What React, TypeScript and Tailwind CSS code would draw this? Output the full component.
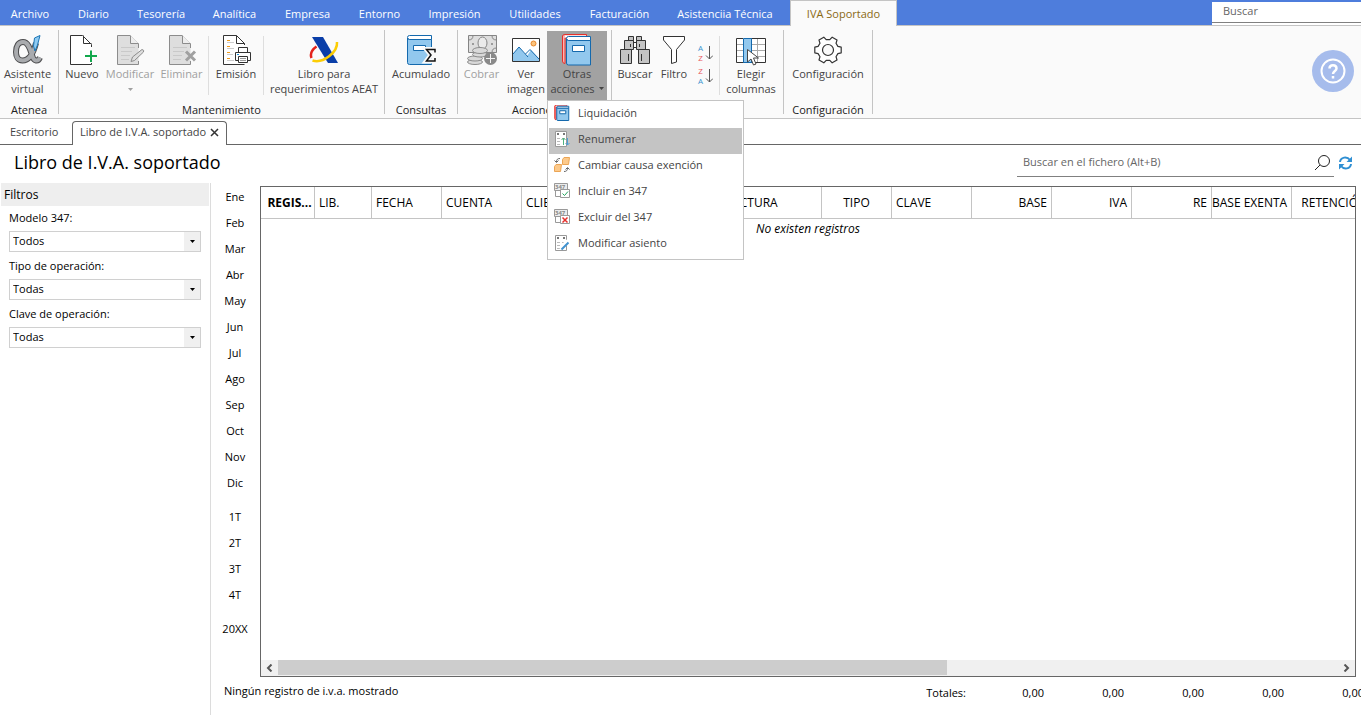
import { useState } from "react";
import type { ReactNode } from "react";

type IconProps = { className?: string };

const ribbonTabs = [
  { label: "Archivo", width: "w-[60px]" },
  { label: "Diario", width: "w-[67px]" },
  { label: "Tesorería", width: "w-[68px]" },
  { label: "Analítica", width: "w-[79px]" },
  { label: "Empresa", width: "w-[67px]" },
  { label: "Entorno", width: "w-[77px]" },
  { label: "Impresión", width: "w-[73px]" },
  { label: "Utilidades", width: "w-[88px]" },
  { label: "Facturación", width: "w-[81px]" },
  { label: "Asistenciia Técnica", width: "w-[130px]" },
];

const columns = [
  { label: "REGIS...", width: "w-[54px]", cell: "pl-1 text-center font-bold" },
  { label: "LIB.", width: "w-[57px]", cell: "pl-1 text-left font-normal" },
  { label: "FECHA", width: "w-[70px]", cell: "pl-1 text-left font-normal" },
  { label: "CUENTA", width: "w-[80px]", cell: "pl-1 text-left font-normal" },
  { label: "CLIENTE", width: "w-[200px]", cell: "pl-1 text-left font-normal" },
  { label: "FACTURA", width: "w-[100px]", cell: "pl-1 text-left font-normal" },
  { label: "TIPO", width: "w-[70px]", cell: "px-1 text-center font-normal" },
  { label: "CLAVE", width: "w-[80px]", cell: "pl-1 text-left font-normal" },
  { label: "BASE", width: "w-[80px]", cell: "pr-1 text-right font-normal" },
  { label: "IVA", width: "w-[80px]", cell: "pr-1 text-right font-normal" },
  { label: "RE", width: "w-[80px]", cell: "pr-1 text-right font-normal" },
  { label: "BASE EXENTA", width: "w-[80px]", cell: "pr-1 text-right font-normal" },
  { label: "RETENCIÓN", width: "w-[80px]", cell: "pr-1 text-right font-normal" },
];

const months = ["Ene", "Feb", "Mar", "Abr", "May", "Jun", "Jul", "Ago", "Sep", "Oct", "Nov", "Dic"];
const quarters = ["1T", "2T", "3T", "4T"];

const filters = [
  { id: "modelo", label: "Modelo 347:", value: "Todos" },
  { id: "tipo", label: "Tipo de operación:", value: "Todas" },
  { id: "clave", label: "Clave de operación:", value: "Todas" },
];

/* ---------- icons ---------- */

function Svg({ size = 32, children }: { size?: number; children: ReactNode }) {
  return (
    <svg width={size} height={size} viewBox={`0 0 ${size} ${size}`} fill="none" className="shrink-0" aria-hidden="true">
      {children}
    </svg>
  );
}

function AlphaIcon() {
  const d = "M24 9C21 21 16 26.500 10.500 26.500C6 26.500 4 23 4 18C4 12 6.500 8 11 8C17 8 18.500 17 20.500 22.500C22 27.500 26 28 28 23.500";
  return (
    <Svg>
      <path d={d} stroke="#4d4d4f" strokeWidth="6" />
      <path d={d} stroke="#a9abae" strokeWidth="4" />
      <path d="M22.500 4L28 1.500L25.500 11L23 17L21.500 12Z" fill="#8fcbf2" stroke="#1b75b5" />
    </Svg>
  );
}

function NewIcon() {
  return (
    <Svg>
      <path d="M25.500 13V10.500L16.500 1.500H4.500V30.500H25.500V29" stroke="#333" fill="#fff" />
      <path d="M17.500 1.500V9.500H25.500" stroke="#333" />
      <path d="M25 16.500V28M19 22H31" stroke="#12a84c" strokeWidth="2" />
    </Svg>
  );
}

function DisabledDoc({ children }: { children: ReactNode }) {
  return (
    <Svg>
      <path d="M24.500 14V10L16 1.500H3.500V30.500H24.500V27" stroke="#8c8c8c" fill="#dedede" />
      <path d="M16.500 1.500V9.500H24.500" stroke="#8c8c8c" fill="#eee" />
      <path d="M7 13.500H21M7 17.500H18M7 21.500H16M7 25.500H15" stroke="#c9c9c9" />
      {children}
    </Svg>
  );
}

function PrintDocIcon() {
  return (
    <Svg>
      <path d="M24.500 11V9.500L16.500 1.500H3.500V30.500H24.500" stroke="#333" fill="#fff" />
      <path d="M16.500 1.500V9.500H24.500" stroke="#333" />
      <path d="M7 6.500H10M7 12.500H10M7 18.500H10M7 24.500H10" stroke="#ef9a1c" />
      <path d="M7 8.500H14M7 14.500H14M7 20.500H13M7 26.500H14" stroke="#ccc" />
      <path d="M18.500 18V13.500H27.500V18" fill="#fff" stroke="#333" />
      <path d="M15.500 18.500H30.500V26.500H15.500Z" fill="#fff" stroke="#333" />
      <path d="M18.500 22.500H27.500V28.500H18.500Z" fill="#fff" stroke="#333" />
      <path d="M20 24.500H26M20 26.500H26" stroke="#999" />
      <path d="M17 20.500H19" stroke="#1b8fd8" />
    </Svg>
  );
}

function AeatIcon() {
  return (
    <Svg>
      <path d="M8.500 12.500C3.500 16 2 20 3.500 24" stroke="#e3231b" strokeWidth="2.500" />
      <path d="M4 3H15L30 29H20Z" fill="#0a3ea8" />
      <path d="M29 8C30 18 15 30 4.500 26.500" stroke="#fccd05" strokeWidth="2.500" />
    </Svg>
  );
}

function LedgerIcon() {
  return (
    <Svg>
      <path d="M2.500 3.500Q2.500 1.500 4.500 1.500H26.500V5.500H4.500Q2.500 5.500 2.500 3.500Z" fill="#fff" stroke="#1469ad" />
      <path d="M2.500 4Q3 5.500 4.500 5.500H26.500V30.500H4.500Q2.500 30.500 2.500 28.500Z" fill="#92c8ee" stroke="#1469ad" />
      <path d="M8.500 11.500H20.500V16.500H8.500Z" fill="#fff" stroke="#1469ad" />
      <path d="M30 18.500V15.500H21.500L26 21L21.500 27H30V24" stroke="#fafafa" strokeWidth="5" />
      <path d="M30 18.500V15.500H21.500L26 21L21.500 27H30V24" stroke="#111" strokeWidth="1.500" />
    </Svg>
  );
}

function CashIcon() {
  return (
    <Svg>
      <path d="M2.500 1.500H30.500V18.500H2.500Z" fill="#dedede" stroke="#858585" />
      <path d="M2.500 6Q7 6 7 1.500M26 1.500Q26 6 30.500 6M26 18.500Q26 14 30.500 14" stroke="#858585" />
      <ellipse cx="16.500" cy="9" rx="4.500" ry="6" fill="#ebebeb" stroke="#858585" />
      <circle cx="7" cy="10" r="1" fill="#858585" />
      <circle cx="26" cy="10" r="1" fill="#858585" />
      <g fill="#d9d9d9" stroke="#8c8c8c">
        <ellipse cx="9" cy="28" rx="7.500" ry="2.500" />
        <ellipse cx="9" cy="24.500" rx="7.500" ry="2.500" />
        <ellipse cx="14" cy="20.500" rx="7.500" ry="2.500" />
        <ellipse cx="14" cy="16.500" rx="7.500" ry="3" />
      </g>
      <circle cx="24.500" cy="24.500" r="6.500" fill="#8a8a8a" />
      <path d="M24.500 20V29M20 24.500H29" stroke="#f3f3f3" />
    </Svg>
  );
}

function PictureIcon() {
  return (
    <Svg>
      <path d="M2.500 4.500H29.500V27.500H2.500Z" fill="#fff" />
      <path d="M3 20L9 13L14 19L17 22L21 16L29 25V27H3Z" fill="#92c8ee" />
      <path d="M3 20L9 13L18 23M15.500 20L20 15.500L29 25" stroke="#1469ad" />
      <circle cx="23.500" cy="9.500" r="2.500" fill="#fbc37c" stroke="#e8862b" />
      <path d="M2.500 4.500H29.500V27.500H2.500Z" stroke="#333" />
    </Svg>
  );
}

function BooksIcon({ small }: { small?: boolean }) {
  return (
    <svg width={small ? 16 : 32} height={small ? 16 : 32} viewBox="0 0 32 32" fill="none" className="shrink-0" aria-hidden="true">
      <path
        d="M1.500 2Q1.500 .5 4 .5H25.500V4H4V29.500Q1.500 29.500 1.500 27Z"
        fill="#fbb5b3"
        stroke="#e5302c"
        strokeWidth={small ? 2 : 1}
      />
      <path d="M4 1.500H25V3.500H4Z" fill="#fff" />
      <g stroke="#1469ad" strokeWidth={small ? 2 : 1}>
        <path d="M5.500 4.500Q5.500 2.500 7.500 2.500H29.500V6.500H7.500Q5.500 6.500 5.500 4.500Z" fill="#fff" />
        <path d="M5.500 5Q6 6.500 7.500 6.500H29.500V31H7.500Q5.500 31 5.500 29Z" fill="#92c8ee" />
        <path d="M11.500 11.500H23.500V17.500H11.500Z" fill="#fff" />
      </g>
    </svg>
  );
}

function BinocularsIcon() {
  return (
    <Svg>
      <g fill="#c4c4c4" stroke="#333">
        <path d="M13 8.500H19V13.500H13Z" fill="#fff" />
        <path d="M9.500 2.500H14.500V6.500H9.500ZM17.500 2.500H22.500V6.500H17.500Z" />
        <path d="M5.500 6.500H14.500V15.500H5.500ZM17.500 6.500H26.500V15.500H17.500Z" />
        <path d="M1.500 15.500H12.500V29.500H1.500ZM19.500 15.500H30.500V29.500H19.500Z" />
      </g>
      <path d="M11.500 10V13M20.500 10V13M9.500 20V27M22.500 20V27" stroke="#333" />
    </Svg>
  );
}

function FunnelIcon() {
  return (
    <Svg>
      <path d="M5.500 2.500H26.500V6L18.500 15.500V28L13.500 29.500V15.500L5.500 6Z" fill="#fff" stroke="#333" />
    </Svg>
  );
}

function SortIcon({ first, second, firstColor, secondColor }: { first: string; second: string; firstColor: string; secondColor: string }) {
  return (
    <span className="flex items-center">
      <span className="flex w-2 flex-col text-center text-[8px] leading-[10px]">
        <span className={firstColor}>{first}</span>
        <span className={secondColor}>{second}</span>
      </span>
      <svg width="8" height="16" viewBox="0 0 8 16" fill="none" stroke="#555" aria-hidden="true">
        <path d="M4.500 1V14M1 10.500L4.500 14L8 10.500" />
      </svg>
    </span>
  );
}

function ColumnsIcon() {
  return (
    <Svg>
      <path d="M1.500 4.500H30.500V28.500H1.500Z" fill="#fff" />
      <path d="M2 10.500H30M2 16.500H30M2 22.500H30M22.500 5V28" stroke="#aaa" />
      <path d="M8 4.500H1.500V28.500H30.500V4.500H16" stroke="#333" />
      <path d="M8.500 4.500H16.500V28.500H8.500Z" fill="#92c8ee" stroke="#1469ad" />
      <path d="M12.500 15.500V28L16 25L18.500 31L21 30L18.500 24H23.500Z" fill="#fff" stroke="#444" />
    </Svg>
  );
}

const gearPoints = Array.from({ length: 6 })
  .flatMap((_, tooth) =>
    [
      [-20, 10.5],
      [-12, 13.5],
      [12, 13.5],
      [20, 10.5],
    ].map(([offset, r]) => {
      const a = ((tooth * 60 + offset) * Math.PI) / 180;
      return `${(16 + r * Math.cos(a)).toFixed(1)},${(16 + r * Math.sin(a)).toFixed(1)}`;
    })
  )
  .join(" ");

function GearIcon() {
  return (
    <Svg>
      <polygon points={gearPoints} fill="#fff" stroke="#333" strokeWidth="1.200" strokeLinejoin="round" />
      <circle cx="16" cy="16" r="5.500" fill="#fafafa" stroke="#333" strokeWidth="1.200" />
    </Svg>
  );
}

function SheetIcon({ children }: { children: ReactNode }) {
  return (
    <Svg size={16}>
      <path d="M1.500 .5H12.500V15.500H1.500Z" fill="#fff" stroke="#999" />
      <path d="M3 3H5M9 3H11" stroke="#777" strokeWidth="2" />
      <path d="M3 7.500H6M3 10.500H6M3 13.500H6M8 7.500H11" stroke="#bbb" />
      {children}
    </Svg>
  );
}

function RenumberIcon() {
  return (
    <SheetIcon>
      <path d="M9.500 14V7M7.500 9L9.500 7L11.500 9" stroke="#4fb27d" />
      <path d="M13.500 7V14M11.500 12L13.500 14L15.500 12" stroke="#4d9fd6" />
    </SheetIcon>
  );
}

function SwapIcon() {
  return (
    <Svg size={16}>
      <path d="M8.500 2.500L10 .5H15.500L14.500 7.500H8.500ZM.5 9.500L2 7.500H7.500L6.500 14.500H.5Z" fill="#fcc98a" stroke="#eba555" />
      <path d="M6 1.500C3.500 1.500 2.500 2.500 2.500 5M.5 3.500L2.500 5.500L4.500 3.500M10 14.500C12.500 14.500 13.500 13.500 13.500 11M11.500 12.500L13.500 10.500L15.500 12.500" stroke="#666" />
    </Svg>
  );
}

function Form347Icon({ children }: { children: ReactNode }) {
  return (
    <Svg size={16}>
      <path d="M1.500 8V13.500H8" stroke="#999" />
      <path d="M.5 .5H13.500V7.500H.5Z" fill="#ececec" stroke="#999" />
      <text x="1" y="6" fontSize="6" fontWeight="700" fill="#888">347</text>
      <path d="M6.500 6.500H15.500V14.500H6.500Z" fill="#fff" stroke="#999" />
      {children}
    </Svg>
  );
}

const menuItems = [
  { label: "Liquidación", icon: <BooksIcon small /> },
  { label: "Renumerar", icon: <RenumberIcon /> },
  { label: "Cambiar causa exención", icon: <SwapIcon /> },
  {
    label: "Incluir en 347",
    icon: (
      <Form347Icon>
        <path d="M8.500 10.500L10.500 12.500L14 8.500" stroke="#21a45d" />
      </Form347Icon>
    ),
  },
  {
    label: "Excluir del 347",
    icon: (
      <Form347Icon>
        <path d="M8.500 8.500L13.500 13.500M13.500 8.500L8.500 13.500" stroke="#e5302c" strokeWidth="1.500" />
      </Form347Icon>
    ),
  },
  {
    label: "Modificar asiento",
    icon: (
      <SheetIcon>
        <path d="M7 14L8 12L14 6" stroke="#fff" strokeWidth="4" />
        <path d="M7.500 14.500L9 13L14.500 7.500" stroke="#4092cf" strokeWidth="2" />
      </SheetIcon>
    ),
  },
];

/* ---------- ribbon ---------- */

function Caret({ className = "" }: IconProps) {
  return (
    <svg width="5" height="3" viewBox="0 0 5 3" className={className} aria-hidden="true">
      <path d="M0 0H5L2.500 3Z" fill="currentColor" />
    </svg>
  );
}

function RibbonButton({ icon, width, disabled, children }: { icon: ReactNode; width: string; disabled?: boolean; children: ReactNode }) {
  return (
    <button
      type="button"
      disabled={disabled}
      className={`flex h-[69px] shrink-0 flex-col items-center pt-[3px] leading-[15px] whitespace-nowrap ${width} ${disabled ? "text-[#a0a0a0]" : "text-[#444]"}`}
    >
      {icon}
      <span className="flex flex-col items-center">{children}</span>
    </button>
  );
}

function RibbonGroup({ title, width, children }: { title: string; width: string; children: ReactNode }) {
  return (
    <section className={`flex shrink-0 flex-col pt-[5px] ${width}`}>
      <div className="flex h-[71px]">{children}</div>
      <h2 className="text-center leading-4 text-[#222]">{title}</h2>
    </section>
  );
}

function GroupLine() {
  return <div className="mt-1 h-[84px] w-px shrink-0 bg-[#c4c4c4]" />;
}

function InnerLine() {
  return <div className="mt-[5px] h-[59px] w-px shrink-0 bg-[#dedede]" />;
}

export default function App() {
  const [menuOpen, setMenuOpen] = useState(true);

  return (
    <div className="flex min-h-screen flex-col overflow-hidden bg-white font-['Open_Sans','Noto_Sans',sans-serif] text-[11px] text-black">
      {/* Ribbon tabs */}
      <header className="flex h-[25px] bg-[#4e7ddc] text-white">
        <nav className="flex">
          {ribbonTabs.map((tab) => (
            <a key={tab.label} href="#" className={`pt-1 text-center leading-5 whitespace-nowrap ${tab.width}`}>
              {tab.label}
            </a>
          ))}
          <a href="#" className="z-10 h-[26px] w-[107px] border-x border-t border-[#c4c4c4] bg-[#fafafa] pt-[3px] text-center leading-5 whitespace-nowrap text-[#8a6914]">
            IVA Soportado
          </a>
        </nav>
        <div className="ml-auto w-[149px] bg-[#4e7ddc] pt-0.5">
          <div className="h-[23px] bg-white">
            <input
              type="text"
              aria-label="Buscar"
              placeholder="Buscar"
              className="block h-[21px] w-full border-b border-[#808080] bg-white px-[11px] pb-1 placeholder:text-[#666] focus:outline-none"
            />
          </div>
        </div>
      </header>

      {/* Ribbon */}
      <div className="flex h-[94px] border-y border-[#c4c4c4] bg-[#fafafa]">
        <RibbonGroup title="Atenea" width="w-[58px]">
          <RibbonButton icon={<AlphaIcon />} width="w-[55px]">
            <span>Asistente</span>
            <span>virtual</span>
          </RibbonButton>
        </RibbonGroup>
        <GroupLine />
        <RibbonGroup title="Mantenimiento" width="w-[325px]">
          <RibbonButton icon={<NewIcon />} width="w-[46px]">
            <span>Nuevo</span>
          </RibbonButton>
          <RibbonButton
            disabled
            width="w-[50px]"
            icon={
              <DisabledDoc>
                <path d="M17 27.500L18.500 23L28 15.500Q30.500 16 29.500 18L20.500 26.500Z" fill="#dedede" stroke="#8c8c8c" />
              </DisabledDoc>
            }
          >
            <span>Modificar</span>
            <Caret className="mt-[7px]" />
          </RibbonButton>
          <RibbonButton
            disabled
            width="w-[53px]"
            icon={
              <DisabledDoc>
                <path d="M20 17.500L29 26.500M29 17.500L20 26.500" stroke="#a0a0a0" strokeWidth="3" />
              </DisabledDoc>
            }
          >
            <span>Eliminar</span>
          </RibbonButton>
          <InnerLine />
          <RibbonButton icon={<PrintDocIcon />} width="w-[54px]">
            <span>Emisión</span>
          </RibbonButton>
          <InnerLine />
          <RibbonButton icon={<AeatIcon />} width="w-[120px]">
            <span>Libro para</span>
            <span>requerimientos AEAT</span>
          </RibbonButton>
        </RibbonGroup>
        <GroupLine />
        <RibbonGroup title="Consultas" width="w-[72px]">
          <RibbonButton icon={<LedgerIcon />} width="w-[72px]">
            <span>Acumulado</span>
          </RibbonButton>
        </RibbonGroup>
        <GroupLine />
        <RibbonGroup title="Acciones" width="w-[153px]">
          <RibbonButton icon={<CashIcon />} width="w-[47px]" disabled>
            <span>Cobrar</span>
          </RibbonButton>
          <RibbonButton icon={<PictureIcon />} width="w-[42px]">
            <span>Ver</span>
            <span>imagen</span>
          </RibbonButton>
          <div className="relative w-[60px]">
            <button
              type="button"
              aria-expanded={menuOpen}
              onClick={() => setMenuOpen(!menuOpen)}
              className="flex h-[69px] w-full flex-col items-center bg-[#a2a2a2] pt-[3px] leading-[15px] whitespace-nowrap text-[#444]"
            >
              <BooksIcon />
              <span>Otras</span>
              <span className="flex items-center gap-1">
                acciones
                <Caret />
              </span>
            </button>
            {menuOpen && (
              <div role="menu" className="absolute top-[69px] left-0 z-20 w-[197px] border border-[#c4c4c4] bg-white p-px">
                {menuItems.map((item) => (
                  <button
                    key={item.label}
                    type="button"
                    role="menuitem"
                    className={`flex h-[26px] w-full items-center gap-2 pb-1 pl-[5px] text-left whitespace-nowrap text-[#444] ${item.label === "Renumerar" ? "bg-[#c4c4c4]" : ""}`}
                  >
                    {item.icon}
                    {item.label}
                  </button>
                ))}
              </div>
            )}
          </div>
        </RibbonGroup>
        <GroupLine />
        <RibbonGroup title="Registros" width="w-[171px]">
          <RibbonButton icon={<BinocularsIcon />} width="w-[46px]">
            <span>Buscar</span>
          </RibbonButton>
          <RibbonButton icon={<FunnelIcon />} width="w-[32px]">
            <span>Filtro</span>
          </RibbonButton>
          <div className="flex w-[29px] flex-col items-center gap-[3px] pt-3">
            <button type="button" aria-label="Orden ascendente">
              <SortIcon first="A" second="Z" firstColor="text-[#3a93d0]" secondColor="text-[#e8575a]" />
            </button>
            <button type="button" aria-label="Orden descendente">
              <SortIcon first="Z" second="A" firstColor="text-[#e8575a]" secondColor="text-[#3a93d0]" />
            </button>
          </div>
          <InnerLine />
          <RibbonButton icon={<ColumnsIcon />} width="w-[62px]">
            <span>Elegir</span>
            <span>columnas</span>
          </RibbonButton>
        </RibbonGroup>
        <GroupLine />
        <RibbonGroup title="Configuración" width="w-[88px]">
          <RibbonButton icon={<GearIcon />} width="w-[88px]">
            <span>Configuración</span>
          </RibbonButton>
        </RibbonGroup>
        <GroupLine />
        <button type="button" aria-label="Ayuda" className="mt-6 mr-[7px] ml-auto flex size-[42px] items-center justify-center rounded-full bg-[#a6bcec]">
          <svg width="26" height="26" viewBox="0 0 26 26" fill="none" stroke="#fff" strokeWidth="2" aria-hidden="true">
            <circle cx="13" cy="13" r="11.500" />
            <path d="M9.500 10.500C9.500 6 16.500 6 16.500 10.500C16.500 13 13 13 13 16M13 18V20.500" strokeWidth="2.500" />
          </svg>
        </button>
      </div>

      {/* Document tabs */}
      <div className="flex h-[26px] items-end">
        <a href="#" className="h-full w-[72px] border-b border-[#666] pl-[10px] leading-[26px] text-[#444]">
          Escritorio
        </a>
        <div className="flex h-6 w-[155px] items-center gap-1 rounded-t border-x border-t border-[#666] pb-0.5 pl-[7px] whitespace-nowrap text-[#444]">
          <span>Libro de I.V.A. soportado</span>
          <button type="button" aria-label="Cerrar">
            <svg width="9" height="9" viewBox="0 0 9 9" stroke="#333" strokeWidth="1.500" aria-hidden="true">
              <path d="M1 1L8 8M8 1L1 8" />
            </svg>
          </button>
        </div>
        <div className="h-full flex-1 border-b border-[#666]" />
      </div>

      {/* Title and file search */}
      <div className="flex h-[38px] items-start justify-between pr-2 pl-[14px]">
        <h1 className="pt-[3px] text-[18px] leading-7">Libro de I.V.A. soportado</h1>
        <div className="flex items-center gap-1">
          <div className="flex h-8 w-[317px] items-center border-b border-[#808080] pt-1">
            <input
              type="text"
              aria-label="Buscar en el fichero"
              placeholder="Buscar en el fichero (Alt+B)"
              className="min-w-0 flex-1 pl-[6px] placeholder:text-[#666] focus:outline-none"
            />
            <svg width="16" height="16" viewBox="0 0 16 16" fill="none" stroke="#222" className="mr-1" aria-hidden="true">
              <circle cx="10" cy="6" r="5.500" />
              <path d="M6 10L1 15" />
            </svg>
          </div>
          <button type="button" aria-label="Actualizar" className="pt-1">
            <svg width="15" height="14" viewBox="0 0 15 14" fill="none" stroke="#2f8fd3" strokeWidth="2" aria-hidden="true">
              <path d="M2 6C2.500 1 9 0 12 4M13 8C12.500 13 6 14 3 10" />
              <path d="M14 .5V6H8.500ZM1 13.500V8H6.500Z" fill="#2f8fd3" stroke="none" />
            </svg>
          </button>
        </div>
      </div>

      <main className="flex flex-1">
        {/* Filters */}
        <aside className="w-[211px] shrink-0 border-r border-[#dcdcdc] pr-px pl-px">
          <h2 className="h-[23px] bg-[#eee] pl-[3px] text-[12px] leading-[23px]">Filtros</h2>
          <form className="flex flex-col gap-1.5 pt-1 pr-2 pl-2">
            {filters.map((f) => (
              <div key={f.id} className="flex flex-col gap-[5px]">
                <label htmlFor={f.id} className="leading-4">{f.label}</label>
                <div className="relative">
                  <select id={f.id} className="block h-[21px] w-full appearance-none border border-[#d0d0d0] bg-white pl-[3px] focus:outline-none">
                    <option>{f.value}</option>
                  </select>
                  <span className="pointer-events-none absolute top-px right-px flex h-[19px] w-4 items-center justify-center bg-[#f0f0f0]">
                    <Caret />
                  </span>
                </div>
              </div>
            ))}
          </form>
        </aside>

        {/* Periods */}
        <nav className="flex w-[49px] shrink-0 flex-col gap-2 pt-px pr-px text-center">
          {[months, quarters, ["20XX"]].map((group) => (
            <div key={group[0]} className="flex flex-col">
              {group.map((period) => (
                <button key={period} type="button" className="h-[26px]">
                  {period}
                </button>
              ))}
            </div>
          ))}
        </nav>

        {/* Records */}
        <div className="-ml-[38px] flex min-w-0 flex-1 flex-col pt-[3px]">
          <div className="mr-[5px] ml-[38px] flex flex-1 flex-col overflow-hidden border border-[#666]">
            <table className="w-[1111px] table-fixed border-separate border-spacing-0 text-[12px]">
              <thead>
                <tr className="h-8">
                  {columns.map((col) => (
                    <th key={col.label} className={`border-r border-b border-[#c4c4c4] py-0 whitespace-nowrap ${col.width} ${col.cell}`}>
                      {col.label}
                    </th>
                  ))}
                </tr>
              </thead>
            </table>
            <p className="flex-1 pt-0.5 text-center text-[12px] leading-4 italic">No existen registros</p>
            <div className="flex h-4 items-center bg-[#f0f0f0]">
              <button type="button" aria-label="Desplazar a la izquierda" className="flex w-[17px] justify-center">
                <svg width="7" height="8" viewBox="0 0 7 8" fill="none" stroke="#555" strokeWidth="2" aria-hidden="true">
                  <path d="M5.500 .5L2 4L5.500 7.500" />
                </svg>
              </button>
              <div className="flex h-full flex-1">
                <div className="h-[15px] w-[63.1%] bg-[#cdcdcd]" />
              </div>
              <button type="button" aria-label="Desplazar a la derecha" className="flex w-[17px] justify-center">
                <svg width="7" height="8" viewBox="0 0 7 8" fill="none" stroke="#555" strokeWidth="2" aria-hidden="true">
                  <path d="M1.500 .5L5 4L1.500 7.500" />
                </svg>
              </button>
            </div>
          </div>
          <footer className="flex h-[38px] overflow-hidden pt-1.5 pl-0.5 leading-4 whitespace-nowrap">
            <span className="w-[662px] shrink-0">Ningún registro de i.v.a. mostrado</span>
            <span className="w-20 shrink-0 pt-0.5 text-right">Totales:</span>
            {["base", "iva", "re", "exenta", "retencion"].map((total) => (
              <output key={total} className="w-20 shrink-0 pt-0.5 pr-0.5 text-right">0,00</output>
            ))}
          </footer>
        </div>
      </main>
    </div>
  );
}
